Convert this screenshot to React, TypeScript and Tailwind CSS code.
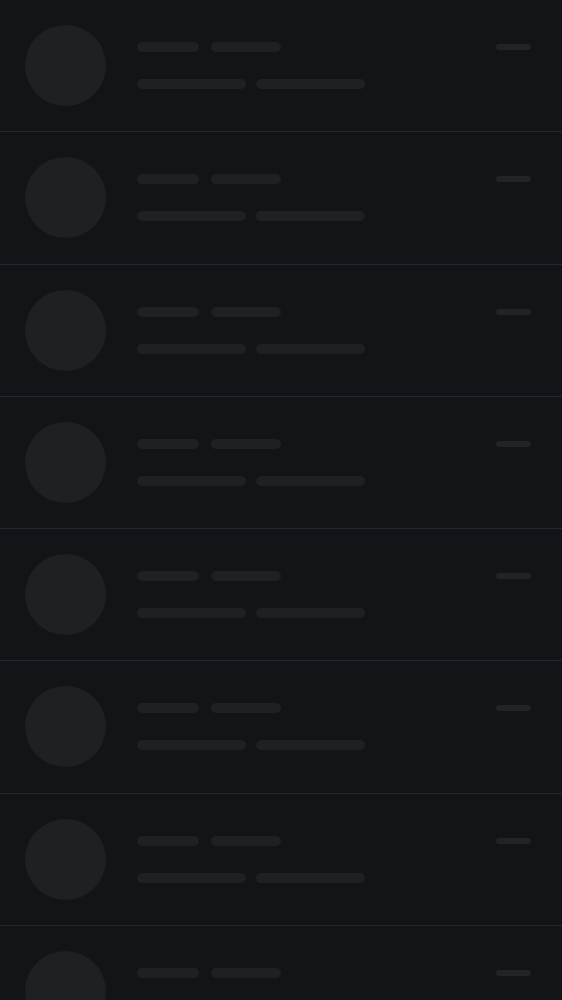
import React from "react";

export default function App() {
  const rows = Array.from({ length: 8 });
  return (
    <div className="min-h-screen w-full bg-[#121418] overflow-hidden">
      {rows.map((_, i) => (
        <div
          key={i}
          className="flex items-center h-[132.28px] border-b border-[#24262b] pl-[25px] pr-[31px]"
        >
          <div className="w-[81px] h-[81px] shrink-0 rounded-full bg-[#1f2024]" />
          <div className="ml-[31px] flex-1 flex flex-col gap-[27px]">
            <div className="flex items-center">
              <div className="w-[62px] h-[10px] rounded-full bg-[#1f2024]" />
              <div className="ml-[12px] w-[70px] h-[10px] rounded-full bg-[#1f2024]" />
              <div className="ml-auto w-[35px] h-[6px] rounded-full bg-[#222327]" />
            </div>
            <div className="flex items-center gap-[10px]">
              <div className="w-[109px] h-[10px] rounded-full bg-[#1f2024]" />
              <div className="w-[109px] h-[10px] rounded-full bg-[#1f2024]" />
            </div>
          </div>
        </div>
      ))}
    </div>
  );
}
